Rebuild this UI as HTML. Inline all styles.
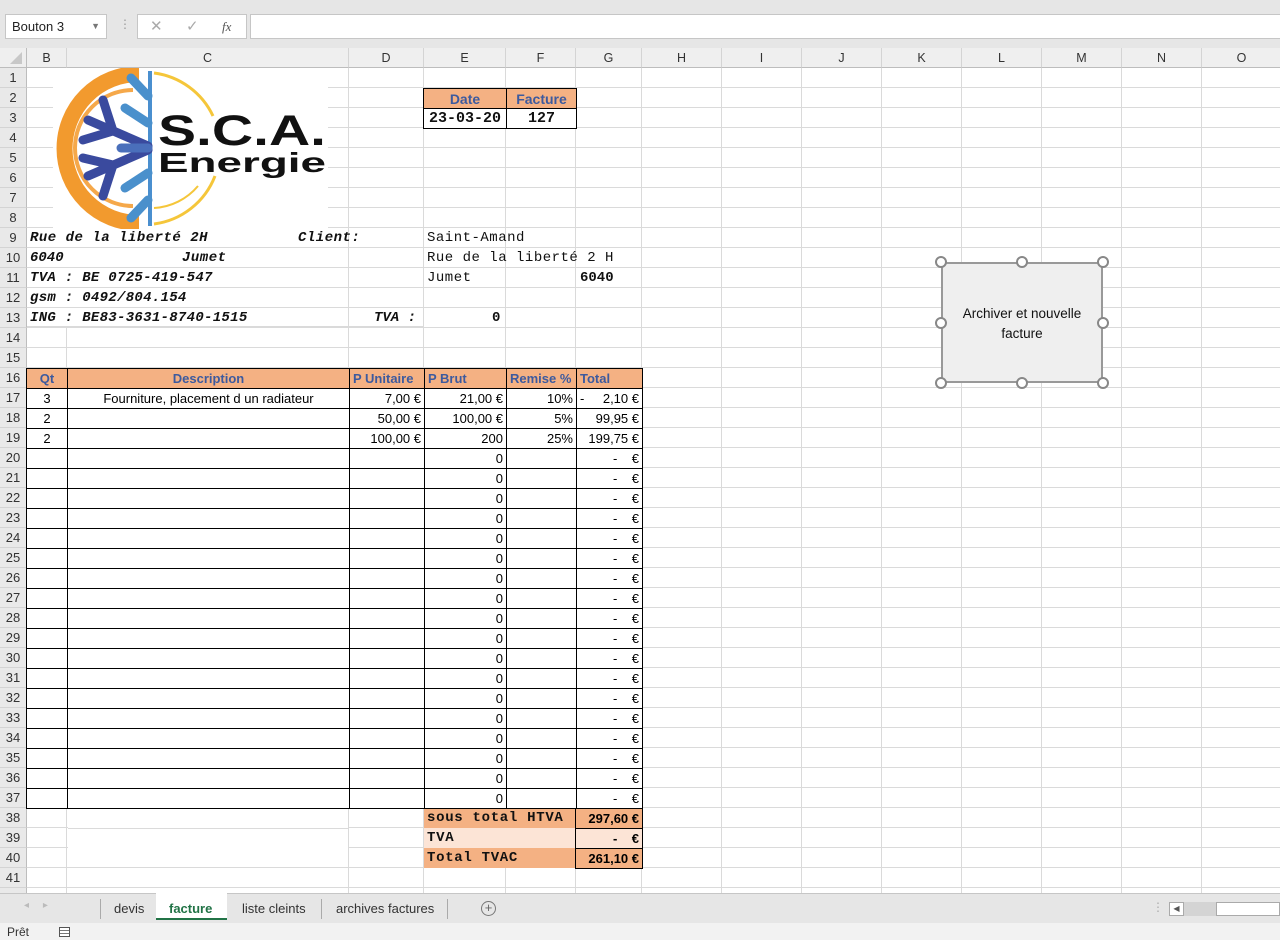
<!DOCTYPE html>
<html><head><meta charset="utf-8">
<style>
*{margin:0;padding:0;box-sizing:border-box}
body{width:1280px;height:940px;overflow:hidden;background:#fff;font-family:"Liberation Sans",sans-serif;position:relative}
.a{position:absolute}
.top{left:0;top:0;width:1280px;height:48px;background:#e6e6e6}
.box{background:#fff;border:1px solid #c6c6c6}
.colh{top:48px;height:20px;background:#efefef;border-right:1px solid #d4d4d4;border-bottom:1px solid #bdbdbd;font-size:12.5px;color:#333;text-align:center;line-height:20px}
.rowh{left:0;width:27px;height:20px;background:#e9e9e9;border-bottom:1px solid #d4d4d4;border-right:1px solid #bdbdbd;font-size:13px;color:#333;text-align:center;line-height:20px}
.grid{left:27px;top:68px;width:1253px;height:825px;
background-image:repeating-linear-gradient(to bottom,transparent 0,transparent 19px,#dadada 19px,#dadada 20px)}
.vl{top:68px;width:1px;height:825px;background:#dadada}
.m{font-family:"Liberation Mono",monospace;font-weight:bold;font-size:14px;color:#111}
.mi{font-family:"Liberation Mono",monospace;font-weight:bold;font-style:italic;font-size:14px;color:#111}
table{border-collapse:collapse;position:absolute}
td{border:1px solid #000;height:20px;padding:0 3px;font-size:13px;white-space:nowrap;background:#fff;line-height:18px}
.h td{background:#f4b183;color:#3d5a9e;font-weight:bold}
.r{text-align:right}.c{text-align:center}
</style></head><body>
<div class="a top"></div>
<div class="a box" style="left:5px;top:14px;width:102px;height:25px;font-size:13px;line-height:23px;padding-left:6px;color:#222">Bouton 3<span style="position:absolute;right:6px;top:0;font-size:9px;color:#777">▼</span></div>
<div class="a" style="left:119px;top:17px;color:#999;font-size:12px">⋮</div>
<div class="a box" style="left:137px;top:14px;width:110px;height:25px;font-size:15px;line-height:23px;color:#aaa"><span style="position:absolute;left:12px">✕</span><span style="position:absolute;left:48px">✓</span><span style="position:absolute;left:84px;font-family:'Liberation Serif';font-style:italic;color:#555;font-size:13px">fx</span></div>
<div class="a box" style="left:250px;top:14px;width:1032px;height:25px"></div>

<div class="a" style="left:0;top:48px;width:27px;height:20px;background:#efefef;border-right:1px solid #bdbdbd;border-bottom:1px solid #bdbdbd"><div style="position:absolute;right:4px;bottom:3px;width:0;height:0;border-left:12px solid transparent;border-bottom:12px solid #c8c8c8"></div></div>
<div class="a colh" style="left:27px;width:40px">B</div>
<div class="a colh" style="left:67px;width:282px">C</div>
<div class="a colh" style="left:349px;width:75px">D</div>
<div class="a colh" style="left:424px;width:82px">E</div>
<div class="a colh" style="left:506px;width:70px">F</div>
<div class="a colh" style="left:576px;width:66px">G</div>
<div class="a colh" style="left:642px;width:80px">H</div>
<div class="a colh" style="left:722px;width:80px">I</div>
<div class="a colh" style="left:802px;width:80px">J</div>
<div class="a colh" style="left:882px;width:80px">K</div>
<div class="a colh" style="left:962px;width:80px">L</div>
<div class="a colh" style="left:1042px;width:80px">M</div>
<div class="a colh" style="left:1122px;width:80px">N</div>
<div class="a colh" style="left:1202px;width:80px">O</div>

<div class="a grid"></div>
<div class="a vl" style="left:66px"></div><div class="a vl" style="left:348px"></div><div class="a vl" style="left:423px"></div><div class="a vl" style="left:505px"></div><div class="a vl" style="left:575px"></div><div class="a vl" style="left:641px"></div><div class="a vl" style="left:721px"></div><div class="a vl" style="left:801px"></div><div class="a vl" style="left:881px"></div><div class="a vl" style="left:961px"></div><div class="a vl" style="left:1041px"></div><div class="a vl" style="left:1121px"></div><div class="a vl" style="left:1201px"></div>
<div class="a" style="left:27px;top:228px;width:396px;height:99px;background:#fff;border-bottom:1px solid #dadada"></div>
<div class="a" style="left:27px;top:247px;width:396px;height:1px;background:#dadada"></div>
<div class="a" style="left:27px;top:267px;width:396px;height:1px;background:#dadada"></div>
<div class="a" style="left:27px;top:287px;width:396px;height:1px;background:#dadada"></div>
<div class="a" style="left:27px;top:307px;width:396px;height:1px;background:#dadada"></div>
<div class="a" style="left:348px;top:228px;width:1px;height:100px;background:#dadada"></div>

<div class="a rowh" style="top:68px">1</div><div class="a rowh" style="top:88px">2</div><div class="a rowh" style="top:108px">3</div><div class="a rowh" style="top:128px">4</div><div class="a rowh" style="top:148px">5</div><div class="a rowh" style="top:168px">6</div><div class="a rowh" style="top:188px">7</div><div class="a rowh" style="top:208px">8</div><div class="a rowh" style="top:228px">9</div><div class="a rowh" style="top:248px">10</div><div class="a rowh" style="top:268px">11</div><div class="a rowh" style="top:288px">12</div><div class="a rowh" style="top:308px">13</div><div class="a rowh" style="top:328px">14</div><div class="a rowh" style="top:348px">15</div><div class="a rowh" style="top:368px">16</div><div class="a rowh" style="top:388px">17</div><div class="a rowh" style="top:408px">18</div><div class="a rowh" style="top:428px">19</div><div class="a rowh" style="top:448px">20</div><div class="a rowh" style="top:468px">21</div><div class="a rowh" style="top:488px">22</div><div class="a rowh" style="top:508px">23</div><div class="a rowh" style="top:528px">24</div><div class="a rowh" style="top:548px">25</div><div class="a rowh" style="top:568px">26</div><div class="a rowh" style="top:588px">27</div><div class="a rowh" style="top:608px">28</div><div class="a rowh" style="top:628px">29</div><div class="a rowh" style="top:648px">30</div><div class="a rowh" style="top:668px">31</div><div class="a rowh" style="top:688px">32</div><div class="a rowh" style="top:708px">33</div><div class="a rowh" style="top:728px">34</div><div class="a rowh" style="top:748px">35</div><div class="a rowh" style="top:768px">36</div><div class="a rowh" style="top:788px">37</div><div class="a rowh" style="top:808px">38</div><div class="a rowh" style="top:828px">39</div><div class="a rowh" style="top:848px">40</div><div class="a rowh" style="top:868px">41</div>
<div class="a" style="left:0;top:888px;width:27px;height:5px;background:#e9e9e9;border-right:1px solid #bdbdbd"></div>

<svg class="a" style="left:53px;top:68px" width="275" height="161" viewBox="0 0 275 161">
<rect width="275" height="161" fill="#fff"/>
<path d="M92 6 A74 74 0 0 0 92 155" fill="none" stroke="#f29a2e" stroke-width="16" transform="translate(-6,0)"/>
<path d="M80 22 A58 58 0 0 0 80 138" fill="none" stroke="#f5a84a" stroke-width="4"/>
<path d="M101 5 A76 76 0 0 1 160 48" fill="none" stroke="#f5c63a" stroke-width="3"/>
<path d="M101 156 A76 76 0 0 0 162 108" fill="none" stroke="#f5c63a" stroke-width="3"/>
<path d="M101 140 A62 62 0 0 0 145 118" fill="none" stroke="#f5c63a" stroke-width="2"/>
<rect x="95" y="3" width="4" height="155" fill="#4a8fcf"/>
<g stroke-linecap="round" fill="none" stroke-width="9">
<path d="M95 78 L35 52 M60 63 L50 32 M60 63 L30 72" stroke="#3a4a9e"/>
<path d="M95 82 L35 108 M60 97 L30 90 M60 97 L50 128" stroke="#3a4a9e"/>
<path d="M95 80 L68 80" stroke="#4a6fbb"/>
<path d="M95 28 L78 10 M95 55 L72 40 M95 105 L72 120 M95 132 L78 150" stroke="#4a90cc"/>
</g>
<text x="105" y="77" font-family="Liberation Sans" font-weight="bold" font-size="43" fill="#111" textLength="168" lengthAdjust="spacingAndGlyphs">S.C.A.</text>
<text x="105" y="104" font-family="Liberation Sans" font-weight="bold" font-size="28" fill="#111" textLength="168" lengthAdjust="spacingAndGlyphs">Energie</text>
</svg>

<table style="left:423px;top:88px">
<tr class="h"><td class="c" style="width:83px;font-size:14px">Date</td><td class="c" style="width:70px;font-size:14px">Facture</td></tr>
<tr><td class="c m" style="font-size:15px">23-03-20</td><td class="c m" style="font-size:15px">127</td></tr>
</table>

<div class="a mi" style="left:30px;top:230px;letter-spacing:0.5px">Rue de la liberté 2H</div>
<div class="a mi" style="left:298px;top:230px;letter-spacing:0.5px">Client:</div>
<div class="a mi" style="left:30px;top:250px">6040</div>
<div class="a mi" style="left:182px;top:250px;letter-spacing:0.5px">Jumet</div>
<div class="a mi" style="left:30px;top:270px;letter-spacing:0.3px">TVA : BE 0725-419-547</div>
<div class="a mi" style="left:30px;top:290px;letter-spacing:0.3px">gsm : 0492/804.154</div>
<div class="a mi" style="left:30px;top:310px;letter-spacing:0.3px">ING : BE83-3631-8740-1515</div>
<div class="a mi" style="left:374px;top:310px">TVA :</div>
<div class="a m" style="left:492px;top:310px">0</div>
<div class="a m" style="left:427px;top:230px;font-weight:normal;letter-spacing:0.5px">Saint-Amand</div>
<div class="a m" style="left:427px;top:250px;font-weight:normal;letter-spacing:0.5px">Rue de la liberté  2 H</div>
<div class="a m" style="left:427px;top:270px;font-weight:normal;letter-spacing:0.5px">Jumet</div>
<div class="a m" style="left:580px;top:270px">6040</div>

<table style="left:26px;top:368px">
<tr class="h"><td class="c" style="width:41px">Qt</td><td class="c" style="width:282px">Description</td><td style="width:75px">P Unitaire</td><td style="width:82px">P Brut</td><td style="width:70px">Remise %</td><td style="width:66px">Total</td></tr>
<tr><td class="c">3</td><td class="c">Fourniture, placement d un radiateur</td><td class="r">7,00 €</td><td class="r">21,00 €</td><td class="r">10%</td><td class="r"><span style="float:left">-</span>2,10 €</td></tr>
<tr><td class="c">2</td><td></td><td class="r">50,00 €</td><td class="r">100,00 €</td><td class="r">5%</td><td class="r">99,95 €</td></tr>
<tr><td class="c">2</td><td></td><td class="r">100,00 €</td><td class="r">200</td><td class="r">25%</td><td class="r">199,75 €</td></tr>
<tr><td></td><td></td><td></td><td class="r">0</td><td></td><td class="r">-&nbsp;&nbsp;&nbsp;&nbsp;€</td></tr>
<tr><td></td><td></td><td></td><td class="r">0</td><td></td><td class="r">-&nbsp;&nbsp;&nbsp;&nbsp;€</td></tr>
<tr><td></td><td></td><td></td><td class="r">0</td><td></td><td class="r">-&nbsp;&nbsp;&nbsp;&nbsp;€</td></tr>
<tr><td></td><td></td><td></td><td class="r">0</td><td></td><td class="r">-&nbsp;&nbsp;&nbsp;&nbsp;€</td></tr>
<tr><td></td><td></td><td></td><td class="r">0</td><td></td><td class="r">-&nbsp;&nbsp;&nbsp;&nbsp;€</td></tr>
<tr><td></td><td></td><td></td><td class="r">0</td><td></td><td class="r">-&nbsp;&nbsp;&nbsp;&nbsp;€</td></tr>
<tr><td></td><td></td><td></td><td class="r">0</td><td></td><td class="r">-&nbsp;&nbsp;&nbsp;&nbsp;€</td></tr>
<tr><td></td><td></td><td></td><td class="r">0</td><td></td><td class="r">-&nbsp;&nbsp;&nbsp;&nbsp;€</td></tr>
<tr><td></td><td></td><td></td><td class="r">0</td><td></td><td class="r">-&nbsp;&nbsp;&nbsp;&nbsp;€</td></tr>
<tr><td></td><td></td><td></td><td class="r">0</td><td></td><td class="r">-&nbsp;&nbsp;&nbsp;&nbsp;€</td></tr>
<tr><td></td><td></td><td></td><td class="r">0</td><td></td><td class="r">-&nbsp;&nbsp;&nbsp;&nbsp;€</td></tr>
<tr><td></td><td></td><td></td><td class="r">0</td><td></td><td class="r">-&nbsp;&nbsp;&nbsp;&nbsp;€</td></tr>
<tr><td></td><td></td><td></td><td class="r">0</td><td></td><td class="r">-&nbsp;&nbsp;&nbsp;&nbsp;€</td></tr>
<tr><td></td><td></td><td></td><td class="r">0</td><td></td><td class="r">-&nbsp;&nbsp;&nbsp;&nbsp;€</td></tr>
<tr><td></td><td></td><td></td><td class="r">0</td><td></td><td class="r">-&nbsp;&nbsp;&nbsp;&nbsp;€</td></tr>
<tr><td></td><td></td><td></td><td class="r">0</td><td></td><td class="r">-&nbsp;&nbsp;&nbsp;&nbsp;€</td></tr>
<tr><td></td><td></td><td></td><td class="r">0</td><td></td><td class="r">-&nbsp;&nbsp;&nbsp;&nbsp;€</td></tr>
<tr><td></td><td></td><td></td><td class="r">0</td><td></td><td class="r">-&nbsp;&nbsp;&nbsp;&nbsp;€</td></tr>
</table>

<div class="a" style="left:68px;top:810px;width:280px;height:58px;background:#fff;border-bottom:1px solid #dadada"></div>
<div class="a" style="left:68px;top:828px;width:280px;height:1px;background:#dadada"></div>
<div class="a" style="left:424px;top:809px;width:152px;height:19px;background:#f4b183"></div>
<div class="a" style="left:424px;top:828px;width:152px;height:20px;background:#fce4d6"></div>
<div class="a" style="left:424px;top:848px;width:152px;height:20px;background:#f4b183"></div>
<div class="a m" style="left:427px;top:810px;letter-spacing:0.7px">sous total HTVA</div>
<div class="a m" style="left:427px;top:830px;letter-spacing:0.7px">TVA</div>
<div class="a m" style="left:427px;top:850px;letter-spacing:0.7px">Total TVAC</div>
<table style="left:575px;top:808px">
<tr><td class="r" style="width:67px;background:#f4b183;font-weight:bold">297,60 €</td></tr>
<tr><td class="r" style="background:#fce4d6;font-weight:bold">-&nbsp;&nbsp;&nbsp;&nbsp;€</td></tr>
<tr><td class="r" style="background:#f4b183;font-weight:bold">261,10 €</td></tr>
</table>

<div class="a" style="left:941px;top:262px;width:162px;height:121px;background:#efefef;border:2px solid #999;font-size:13.5px;color:#111;text-align:center;padding-top:40px;line-height:20px">Archiver et nouvelle<br>facture</div>
<svg class="a" style="left:934px;top:255px" width="176" height="135"><g fill="#fff" stroke="#888" stroke-width="2"><circle cx="7" cy="7" r="5"/><circle cx="88" cy="7" r="5"/><circle cx="169" cy="7" r="5"/><circle cx="7" cy="68" r="5"/><circle cx="169" cy="68" r="5"/><circle cx="7" cy="128" r="5"/><circle cx="88" cy="128" r="5"/><circle cx="169" cy="128" r="5"/></g></svg>

<div class="a" style="left:0;top:893px;width:1280px;height:30px;background:#e6e6e6;border-top:1px solid #c6c6c6"></div>
<div class="a" style="left:24px;top:900px;color:#bbb;font-size:10px">◂&nbsp;&nbsp;&nbsp;&nbsp;&nbsp;▸</div>
<div class="a" style="left:100px;top:899px;width:1px;height:20px;background:#aaa"></div>
<div class="a" style="left:114px;top:901px;font-size:13px;color:#333">devis</div>
<div class="a" style="left:156px;top:893px;width:71px;height:27px;background:#fff;border-bottom:2px solid #217346"></div>
<div class="a" style="left:169px;top:901px;font-size:13px;color:#217346;font-weight:bold">facture</div>
<div class="a" style="left:242px;top:901px;font-size:13px;color:#333">liste cleints</div>
<div class="a" style="left:321px;top:899px;width:1px;height:20px;background:#aaa"></div>
<div class="a" style="left:336px;top:901px;font-size:13px;color:#333">archives factures</div>
<div class="a" style="left:447px;top:899px;width:1px;height:20px;background:#aaa"></div>
<div class="a" style="left:481px;top:901px;width:15px;height:15px;border:1px solid #777;border-radius:50%;font-size:13px;line-height:12px;text-align:center;color:#666">+</div>
<div class="a" style="left:1152px;top:900px;color:#aaa;font-size:12px">⋮</div>
<div class="a" style="left:1169px;top:902px;width:15px;height:14px;background:#fff;border:1px solid #aaa;font-size:8px;color:#555;text-align:center;line-height:12px">◀</div>
<div class="a" style="left:1184px;top:902px;width:33px;height:14px;background:#d4d4d4"></div>
<div class="a" style="left:1216px;top:902px;width:64px;height:14px;background:#fff;border:1px solid #aaa"></div>
<div class="a" style="left:0;top:923px;width:1280px;height:17px;background:#f2f2f2"></div>
<div class="a" style="left:7px;top:925px;font-size:12px;color:#333">Prêt</div>
<div class="a" style="left:59px;top:927px;width:11px;height:10px;border:1px solid #555;background:repeating-linear-gradient(#fff 0,#fff 2px,#777 2px,#777 3px)"></div>
</body></html>
